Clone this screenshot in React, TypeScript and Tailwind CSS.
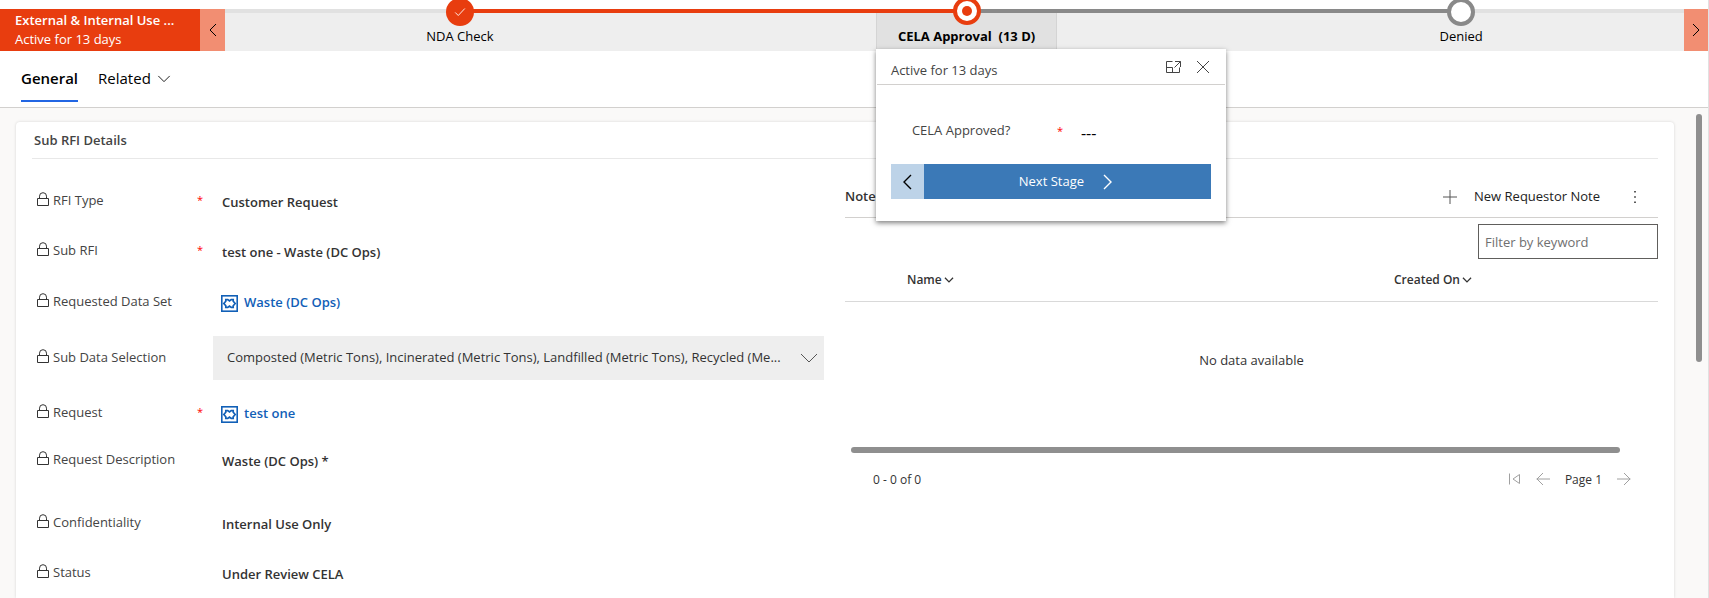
import type { ReactNode } from "react";

type IconProps = { d: string; className?: string; box?: string; width?: number };

function Icon({ d, className = "size-4", box = "0 0 16 16", width = 1 }: IconProps) {
  return (
    <svg viewBox={box} className={`shrink-0 ${className}`} fill="none" stroke="currentColor" strokeWidth={width} aria-hidden="true">
      <path d={d} />
    </svg>
  );
}

const CHEVRON_LEFT = "M11 2 5 8l6 6";
const CHEVRON_RIGHT = "M5 2l6 6-6 6";
const CHEVRON_DOWN = "M1.5 4.5 8 11l6.500-6.500";

function LockIcon() {
  return (
    <svg viewBox="0 0 12 15" className="mb-1 h-[15px] w-3 shrink-0 text-[#333]" fill="none" stroke="currentColor" aria-hidden="true">
      <path d="M.5 6.500h11v7H.5zM2.500 6.500V4.200a3.500 3.500 0 0 1 7 0v2.300" />
    </svg>
  );
}

function EntityIcon() {
  return (
    <svg viewBox="0 0 17 17" className="size-[17px] shrink-0" fill="none" stroke="currentColor" aria-hidden="true">
      <rect x=".8" y=".8" width="15.400" height="15.400" strokeWidth="1.600" />
      <path
        d="M4.800 4.600h2l1.700 1.300 1.700-1.300h2v1.600l2 2.300-2 2.300v1.600h-2l-1.700-1.300-1.700 1.300h-2v-1.600l-2-2.300 2-2.300z"
        strokeWidth="1.700"
      />
    </svg>
  );
}

type FieldProps = { label: string; required?: boolean; height?: string; children: ReactNode };

function Field({ label, required, height = "h-[50px]", children }: FieldProps) {
  return (
    <div className={`flex items-center ${height}`}>
      <dt className="flex w-[181px] shrink-0 items-center pr-2.5 pl-[5px] text-[#444]">
        <LockIcon />
        <span className="ml-1 flex-1 whitespace-nowrap">{label}</span>
        {required && <span className="pb-0.5 text-[11px] leading-4 text-[#f00]">*</span>}
      </dt>
      <dd className="min-w-0 flex-1 font-semibold text-[#333]">{children}</dd>
    </div>
  );
}

function Value({ children }: { children: ReactNode }) {
  return <span className="block pt-1 pl-[9px]">{children}</span>;
}

function RecordLink({ children }: { children: ReactNode }) {
  return (
    <a href="#record" className="ml-2 flex w-fit items-center gap-1.5 pt-0.5 text-[#1160b7]">
      <EntityIcon />
      {children}
    </a>
  );
}

function StagePopup() {
  return (
    <section className="absolute top-full left-[-1px] z-20 w-[350px] bg-white text-[#444] shadow-[0_2px_5px_rgba(0,0,0,0.5)]">
      <header className="mx-px flex h-9 items-center border-b border-[#d2d0ce] px-3.5">
        <h2 className="flex-1 pt-2">Active for 13 days</h2>
        <button type="button" aria-label="Dock" className="mr-3.5">
          <Icon d="M7.500 2.500h-6v11h13V8.500M10 2.500h5.500V8M15.500 2.500l-6 6M1.500 8.500h6v5" />
        </button>
        <button type="button" aria-label="Close">
          <Icon d="M2 2l12 12M14 2 2 14" />
        </button>
      </header>
      <div className="flex h-[79px] items-center pt-3 pl-9">
        <span className="w-[145px]">CELA Approved?</span>
        <span className="w-6 text-[11px] leading-4 text-[#f00]">*</span>
        <span className="pt-1 text-base leading-4 text-black">---</span>
      </div>
      <div className="mx-[15px] mb-[22px] flex h-[35px]">
        <button type="button" aria-label="Previous stage" className="flex w-[33px] items-center justify-center bg-[#bdd3e8] text-black">
          <Icon d="M12 1 5 8l7 7" width={1.4} />
        </button>
        <button type="button" className="flex flex-1 items-center justify-center gap-4 bg-[#3b79b7] text-white">
          Next Stage
          <Icon d="M4 1l7 7-7 7" width={1.4} />
        </button>
      </div>
    </section>
  );
}

function ProcessBar() {
  return (
    <div className="mt-[9px] flex h-[42px]">
      <div className="flex w-[200px] shrink-0 flex-col justify-center bg-[#e83d0f] pl-[15px] text-white">
        <strong className="leading-[19px] font-semibold">External &amp; Internal Use ...</strong>
        <span className="leading-[19px]">Active for 13 days</span>
      </div>
      <button type="button" aria-label="Scroll stages left" className="flex w-[25px] shrink-0 items-center justify-center bg-[#f28e72] text-black">
        <Icon d={CHEVRON_LEFT} />
      </button>
      <ol className="relative flex flex-1 justify-around bg-[#eee] text-black">
        <li aria-hidden="true" className="absolute inset-x-0 top-0 h-1 bg-[#e1e1e1]" />
        <li aria-hidden="true" className="absolute top-0 left-[16%] z-10 h-1 w-[35%] bg-[#e83d0f]" />
        <li aria-hidden="true" className="absolute top-0 left-[51%] z-10 h-1 w-[34%] bg-[#898989]" />
        <li className="relative flex justify-center px-5 pt-[17px]">
          <span className="absolute -top-[11px] z-10 flex size-7 items-center justify-center rounded-full bg-[#e83d0f] text-white">
            <Icon d="M2.500 8.500 6 12l7.500-8" className="size-3.5" />
          </span>
          <button type="button" className="h-5 leading-5">NDA Check</button>
        </li>
        <li className="relative mb-0.5 flex justify-center border-x border-[#d4d4d4] bg-[#e1e1e1] px-[21px] pt-[17px]">
          <span className="absolute -top-3 z-10 flex size-7 items-center justify-center rounded-full border-4 border-[#e83d0f] bg-white">
            <span className="size-2.5 rounded-full bg-[#e83d0f]" />
          </span>
          <button type="button" className="h-5 leading-5 font-bold whitespace-pre">CELA Approval  (13 D)</button>
          <StagePopup />
        </li>
        <li className="relative flex justify-center px-5 pt-[17px]">
          <span className="absolute -top-[11px] z-10 size-7 rounded-full border-4 border-[#898989] bg-white" />
          <button type="button" className="h-5 leading-5">Denied</button>
        </li>
      </ol>
      <button type="button" aria-label="Scroll stages right" className="flex w-6 shrink-0 items-center justify-center bg-[#f28e72] text-black">
        <Icon d={CHEVRON_RIGHT} />
      </button>
    </div>
  );
}

function Tabs() {
  return (
    <nav className="flex h-[57px] items-start gap-5 border-b border-[#d2d0ce] pt-3.5 pl-[21px] text-[15px] text-black">
      <button type="button" className="h-[37px] border-b-2 border-[#2266e3] pb-2 font-semibold">General</button>
      <button type="button" className="flex h-[37px] items-center gap-1.5 border-b-2 border-transparent pb-2">
        Related
        <Icon d={CHEVRON_DOWN} className="size-3.5" />
      </button>
    </nav>
  );
}

function Details() {
  return (
    <dl className="min-w-0">
      <Field label="RFI Type" required>
        <Value>Customer Request</Value>
      </Field>
      <Field label="Sub RFI" required>
        <Value>test one - Waste (DC Ops)</Value>
      </Field>
      <Field label="Requested Data Set" height="h-[52px]">
        <RecordLink>Waste (DC Ops)</RecordLink>
      </Field>
      <Field label="Sub Data Selection" height="h-[60px]">
        <button type="button" className="flex h-11 w-full items-center bg-[#eee] pr-1.5 pl-3.5 text-left font-normal">
          <span className="flex-1">
            Composted (Metric Tons), Incinerated (Metric Tons), Landfilled (Metric Tons), Recycled (Me...
          </span>
          <Icon d="M1 5l8 8 8-8" box="0 0 18 18" className="size-[18px] text-[#555]" />
        </button>
      </Field>
      <Field label="Request" required>
        <RecordLink>test one</RecordLink>
      </Field>
      <Field label="Request Description" height="h-11">
        <Value>Waste (DC Ops) *</Value>
      </Field>
      <div className="h-4" />
      <Field label="Confidentiality">
        <Value>Internal Use Only</Value>
      </Field>
      <Field label="Status">
        <Value>Under Review CELA</Value>
      </Field>
    </dl>
  );
}

function Notes() {
  return (
    <section className="min-w-0 text-[#333]">
      <header className="flex h-[42px] items-center border-b border-[#d2d0ce]">
        <h3 className="flex-1 font-semibold">Notes</h3>
        <button type="button" className="flex items-center gap-4 text-[#222]">
          <Icon d="M8 1v14M1 8h14" className="size-4 text-[#555]" />
          New Requestor Note
        </button>
        <button type="button" aria-label="More commands" className="mr-[15px] ml-[27px]">
          <svg viewBox="0 0 16 16" className="size-4" fill="currentColor" aria-hidden="true">
            <path d="M7.200 2h1.600v1.600H7.200zM7.200 7.200h1.600v1.600H7.200zM7.200 12.400h1.600V14H7.200z" />
          </svg>
        </button>
      </header>
      <div className="mt-1.5 flex justify-end">
        <input
          type="search"
          aria-label="Filter by keyword"
          placeholder="Filter by keyword"
          className="h-[35px] w-[180px] border border-[#605e5c] px-1.5 placeholder:text-[#707070]"
        />
      </div>
      <table className="w-full table-fixed">
        <thead>
          <tr className="h-[42px] border-b border-[#d9d9d9] text-left text-xs">
            <th scope="col" className="pl-[62px] font-semibold">
              <button type="button" className="flex items-center gap-0.5">
                Name
                <Icon d={CHEVRON_DOWN} className="size-2.5" width={2} />
              </button>
            </th>
            <th scope="col" className="w-[264px] font-semibold">
              <button type="button" className="flex items-center gap-0.5">
                Created On
                <Icon d={CHEVRON_DOWN} className="size-2.5" width={2} />
              </button>
            </th>
          </tr>
        </thead>
        <tbody>
          <tr>
            <td colSpan={2} className="h-[118px] text-center">No data available</td>
          </tr>
        </tbody>
      </table>
      <div className="mt-7 mr-[38px] ml-1.5 h-1.5 rounded-full bg-[#8f8f8f]" />
      <footer className="mt-4 flex h-5 items-center pr-[26px] pl-7 text-xs">
        <span className="flex-1 pt-0.5">0 - 0 of 0</span>
        <button type="button" aria-label="First page" className="mr-3 text-[#a0a0a0]">
          <Icon d="M2.500 2.500v11M12.500 3.500v9L6 8z" />
        </button>
        <button type="button" aria-label="Previous page" className="mr-3.5 text-[#a0a0a0]">
          <Icon d="M15 8H1.500M8 2 2 8l6 6" />
        </button>
        <span className="pt-0.5">Page 1</span>
        <button type="button" aria-label="Next page" className="ml-3.5 text-[#a0a0a0]">
          <Icon d="M1 8h13.500M8 2l6 6-6 6" />
        </button>
      </footer>
    </section>
  );
}

export default function App() {
  return (
    <div className="flex h-screen flex-col overflow-hidden border-r border-[#e1e1e1] bg-white font-['Open_Sans','Noto_Sans',sans-serif] text-[13px]">
      <ProcessBar />
      <Tabs />
      <main className="flex min-h-0 flex-1 bg-[#faf9f8] pt-3.5 pr-1.5 pl-4">
        <div className="min-w-0 flex-1 rounded-t bg-white px-4 shadow-[0_0_3px_rgba(0,0,0,0.15)]">
          <h2 className="flex h-[37px] items-center border-b border-[#e8e8e8] pt-0.5 pl-0.5 font-semibold text-[#444]">Sub RFI Details</h2>
          <div className="grid grid-cols-[792fr_813fr] gap-[21px] pt-[17px]">
            <Details />
            <Notes />
          </div>
        </div>
        <div className="-mt-2 ml-[22px] h-[248px] w-1.5 rounded-full bg-[#8f8f8f]" />
      </main>
    </div>
  );
}
